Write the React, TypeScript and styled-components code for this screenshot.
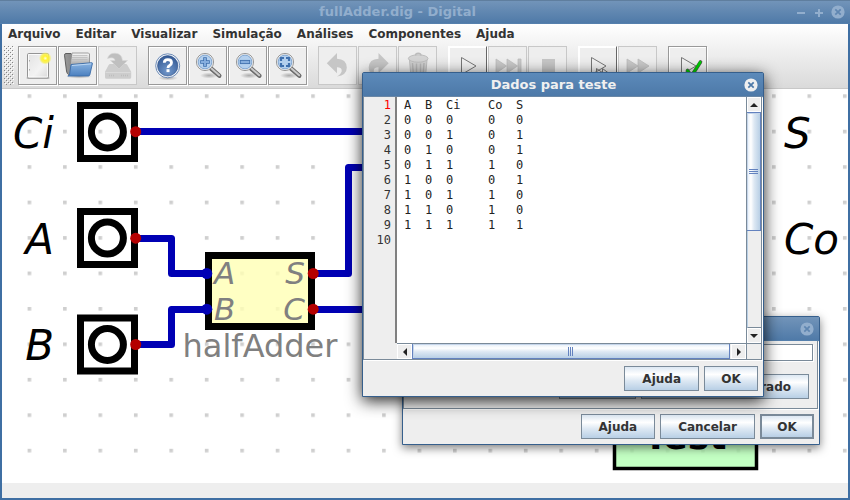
import React from "react";
import styled, { createGlobalStyle, css } from "styled-components";

const steel = "#7a8a99";
const face = "#eeeeee";
const metal = "linear-gradient(#dde8f3 0%, #ffffff 32%, #dde8f3 60%, #b8cfe5 100%)";

const GlobalStyle = createGlobalStyle`
  * { box-sizing: border-box; }
  body { margin: 0; }
  body, button, input {
    font-family: "DejaVu Sans", Verdana, sans-serif;
    font-size: 12px;
    color: #333;
  }
`;

const Desktop = styled.div`
  position: relative;
  min-height: 100vh;
  overflow: hidden;
  display: flex;
  flex-direction: column;
`;

const MainWindow = styled.main`
  flex: 1;
  display: flex;
  flex-direction: column;
  border: solid #3f6fa3;
  border-width: 0 2px 2px;
`;

const TitleBar = styled.header<{ $active?: boolean }>`
  height: 24px;
  display: flex;
  align-items: center;
  justify-content: flex-end;
  border-top: 1px solid ${(p) => (p.$active ? "#3a6798" : "#5f7e9e")};
  border-bottom: 1px solid ${(p) => (p.$active ? "#6a87a6" : "#5580ad")};
  background: ${(p) =>
    p.$active
      ? "linear-gradient(#5c8aba, #4d79a8)"
      : "linear-gradient(#7294b9, #4f7aa8)"};
  color: ${(p) => (p.$active ? "#f0f0f0" : "#92aecd")};
`;

const MainTitle = styled(TitleBar)`
  margin: 0 -2px;
`;

const Title = styled.h1`
  flex: 1;
  margin: 0;
  font-size: 13px;
  line-height: 16px;
  font-weight: bold;
  text-align: center;
  white-space: nowrap;
`;

const WindowButtons = styled.div`
  display: flex;
  gap: 4px;
  padding-right: 5px;
`;

const WindowButton = styled.button`
  width: 14px;
  height: 14px;
  padding: 0;
  border: 0;
  background: none;
  color: inherit;
  svg { display: block; }
`;

const TopBars = styled.div`
  background: linear-gradient(#ffffff, #dadada);
  border-bottom: 1px solid #c8c8c8;
`;

const MenuBar = styled.nav`
  display: flex;
  gap: 15px;
  height: 20px;
  padding: 0 6px;
`;

const MenuItem = styled.button`
  padding: 0;
  border: 0;
  background: none;
  font-weight: bold;
  line-height: 18px;
  white-space: nowrap;
`;

const Toolbar = styled.div`
  display: flex;
  gap: 11px;
  padding: 2px 2px 3px;
`;

const Grip = styled.svg`
  width: 10px;
  height: 39px;
  margin-right: -7px;
`;

const ToolGroup = styled.div`
  display: flex;
  gap: 1px;
`;

const ToolButton = styled.button<{ $raised?: boolean }>`
  width: 39px;
  height: 39px;
  padding: 0;
  background: ${face};
  border: 1px solid #999;
  box-shadow: inset 1px 1px #fff, 1px 1px #fff;
  svg { display: block; }
  &:disabled {
    border-color: #c8c8c8;
    box-shadow: none;
  }
  ${(p) =>
    p.$raised &&
    css`
      border-color: #fff #666 #999 #fff;
    `}
`;

const Canvas = styled.section`
  flex: 1;
  display: flex;
  background: #fff;
`;

const Circuit = styled.svg`
  flex: 1;
  min-width: 0;
  height: 394px;
  min-height: 100%;
  font-family: "DejaVu Sans", Verdana, sans-serif;
`;

const StatusBar = styled.footer`
  height: 15px;
  background: ${face};
`;

const Dialog = styled.section<{ $x: number; $y: number; $w: number; $active?: boolean }>`
  position: absolute;
  left: ${(p) => p.$x}px;
  top: ${(p) => p.$y}px;
  width: ${(p) => p.$w}px;
  background: ${face};
  border: 1px solid #365f8c;
  border-radius: 2px 2px 0 0;
  box-shadow: ${(p) =>
    p.$active ? "0 4px 16px rgba(0,0,0,.85)" : "0 3px 10px rgba(0,0,0,.5)"};
`;

const DialogTitle = styled(TitleBar)`
  border-top: 0;
`;

const DialogFooter = styled.div`
  display: flex;
  justify-content: flex-end;
  gap: 5px;
  padding: 5px;
`;

const Button = styled.button<{ $default?: boolean }>`
  height: 25px;
  border: ${(p) => (p.$default ? 2 : 1)}px solid ${steel};
  padding: 0 ${(p) => (p.$default ? 15 : 16)}px;
  background: ${metal};
  font-weight: bold;
  line-height: 20px;
  white-space: nowrap;
  min-width: 54px;
`;

const WideButton = styled(Button)`
  padding: 0 17px;
`;

const ScrollPane = styled.div`
  display: grid;
  grid-template-columns: 33px 1fr 15px;
  grid-template-rows: 246px 16px;
  border: solid ${steel};
  border-width: 0 1px 1px;
  margin: 0 1px 1px 0;
  box-shadow: 1px 1px #fff;
`;

const Gutter = styled.ol`
  margin: 0;
  padding: 1px 4px 0 0;
  list-style: none;
  text-align: right;
  border-right: 2px solid #808080;
  font: 12px/15px "DejaVu Sans Mono", monospace;
`;

const LineNumber = styled.li<{ $current: boolean }>`
  color: ${(p) => (p.$current ? "#f00" : "#333")};
`;

const Editor = styled.textarea`
  width: 100%;
  height: 100%;
  margin: 0;
  padding: 1px 7px 0;
  border: 0;
  outline: 0;
  resize: none;
  overflow: hidden;
  background: #fff;
  color: #222;
  font: 12px/15px "DejaVu Sans Mono", monospace;
  tab-size: 7px;
  white-space: pre;
`;

const ScrollBar = styled.div<{ $horizontal?: boolean }>`
  display: flex;
  flex-direction: ${(p) => (p.$horizontal ? "row" : "column")};
  border: solid ${steel};
  border-width: ${(p) => (p.$horizontal ? "1px 0 0" : "0 0 0 1px")};
  ${(p) => p.$horizontal && "grid-column: 2;"}
`;

const Arrow = styled.button`
  flex: 0 0 15px;
  display: grid;
  place-items: center;
  min-width: 0;
  padding: 0;
  border: 1px solid #fff;
  background: ${face};
  color: #222;
`;

const Thumb = styled.div<{ $horizontal?: boolean }>`
  display: grid;
  place-items: center;
  border: 1px solid #6382bf;
  box-shadow: inset 1px 1px #c5d5ea;
  ${(p) =>
    p.$horizontal
      ? css`
          flex: 1;
          border-top: 0;
          margin-right: 1px;
          background: linear-gradient(#e3edf7, #fff 30%, #dde8f3 55%, #b8cfe5);
        `
      : css`
          flex: 0 0 119px;
          border-left: 0;
          background: linear-gradient(90deg, #e3edf7, #fff 30%, #dde8f3 55%, #b8cfe5);
        `}
`;

const Track = styled.div`
  flex: 1;
  border-bottom: 1px solid ${steel};
  border-left: 1px solid #b8cfe5;
`;

const Corner = styled.div`
  border: solid ${steel};
  border-width: 1px 0 0 1px;
`;

const Form = styled.div`
  display: flex;
  flex-direction: column;
  gap: 13px;
  margin: 0 1px 0 0;
  padding: 3px 4px 9px;
  border: 1px solid ${steel};
  border-top: 0;
  box-shadow: 1px 1px #fff;
`;

const TextBox = styled.input`
  align-self: flex-end;
  width: 60%;
  height: 17px;
  border: 1px solid ${steel};
  box-shadow: 1px 1px #fff;
  background: #fff;
`;

const FormButtons = styled.div`
  display: flex;
  justify-content: flex-end;
  gap: 5px;
  padding-right: 4px;
`;

/* ---------- icons ---------- */

const CloseIcon = ({ cross }: { cross: string }) => (
  <svg width="14" height="14" viewBox="0 0 14 14">
    <circle cx="7" cy="7" r="6.6" fill="currentColor" />
    <path d="M4.3 4.3l5.4 5.4M9.7 4.3L4.3 9.7" stroke={cross} strokeWidth="1.7" />
  </svg>
);

const Icon = ({ children }: { children: React.ReactNode }) => (
  <svg width="37" height="37" viewBox="0 0 37 37">{children}</svg>
);

const HiddenDefs = styled.svg`
  position: absolute;
`;

const Defs = () => (
  <HiddenDefs width="0" height="0" aria-hidden="true">
    <defs>
      <pattern id="grip" width="4" height="4" patternUnits="userSpaceOnUse">
        <path d="M0 0h1v1H0zM2 2h1v1H2z" fill="#858585" />
        <path d="M1 1h1v1H1zM3 3h1v1H3z" fill="#fff" />
      </pattern>
      <linearGradient id="paper" x1="0" y1="0" x2="1" y2="1">
        <stop offset="0" stopColor="#e2e2e2" /><stop offset=".6" stopColor="#f3f3f3" /><stop offset="1" stopColor="#d8d8d8" />
      </linearGradient>
      <radialGradient id="glow">
        <stop offset="0" stopColor="#fffde0" /><stop offset=".35" stopColor="#fff230" />
        <stop offset=".7" stopColor="#f8f050" stopOpacity=".85" /><stop offset="1" stopColor="#f5f080" stopOpacity="0" />
      </radialGradient>
      <linearGradient id="folder" x1="0" y1="0" x2="0" y2="1">
        <stop offset="0" stopColor="#8ab4e2" /><stop offset="1" stopColor="#4b80bf" />
      </linearGradient>
      <linearGradient id="folderBack" x1="0" y1="0" x2="1" y2="0">
        <stop offset="0" stopColor="#9a9a9a" /><stop offset="1" stopColor="#686868" />
      </linearGradient>
      <linearGradient id="sheet" x1="0" y1="0" x2="0" y2="1">
        <stop offset="0" stopColor="#fafafa" /><stop offset="1" stopColor="#a0a0a0" />
      </linearGradient>
      <radialGradient id="helpBlue" cx=".5" cy=".75" r=".8">
        <stop offset="0" stopColor="#7399cc" /><stop offset="1" stopColor="#2f5590" />
      </radialGradient>
      <radialGradient id="shade">
        <stop offset="0" stopColor="#000" stopOpacity=".28" /><stop offset="1" stopColor="#000" stopOpacity="0" />
      </radialGradient>
    </defs>
  </HiddenDefs>
);

const NewIcon = () => (
  <Icon>
    <rect x="7.5" y="30" width="23" height="2" rx="1" fill="#bbb" />
    <rect x="8.5" y="6.5" width="21" height="24.5" rx="1.2" fill="url(#paper)" stroke="#949494" />
    <path d="M9.5 7.5h19v22.5h-19z" fill="none" stroke="#fff" strokeOpacity=".8" />
    <path d="M10.5 13v1.5M10.5 22v1.5" stroke="#aaa" />
    <circle cx="26.3" cy="11.3" r="6.4" fill="url(#glow)" />
  </Icon>
);

const OpenIcon = () => (
  <Icon>
    <ellipse cx="20" cy="29.5" rx="13" ry="2.2" fill="url(#shade)" />
    <path d="M5.5 8.2q0-1.7 1.5-1.7h5l1.2 2h14.3v19H9.5Q8 27 7.5 24z" fill="url(#folderBack)" stroke="#5e5e5e" />
    <path d="M13 6h16.5l1 1v12H11z" fill="url(#sheet)" stroke="#888" strokeWidth=".8" />
    <path d="M13.5 8.5h15M13 10.5h15.5M13 12.5h15.5" stroke="#bbb" strokeWidth=".8" />
    <path d="M12 17.5l20.8-1.8q.8 0 .6 1l-2.6 11.2q-.3 1-1.3 1.1H8.8q1.5-.3 1.8-1.7z" fill="url(#folder)" stroke="#3b6ca8" strokeWidth=".9" />
    <path d="M13 18.5l19-1.6" stroke="#bcd7f3" />
  </Icon>
);

const SaveIcon = () => (
  <Icon>
    <path d="M11.5 17h15q1.5 0 2 1.3l3.7 6.4v5.600q0 1.500-1.500 1.500H7.500Q6 31.800 6 30.300v-5.600l3.500-6.400q.5-1.300 2-1.300z" fill="#cdcdcd" />
    <path d="M6.500 25.500h25" stroke="#dadada" />
    <path d="M22 28.500h7M10 28.500h6" stroke="#bdbdbd" strokeWidth="1.5" strokeDasharray="1 1" />
    <path d="M8.500 11.500Q10 6 16 6.200q7 .3 7.500 7.300h5L20 22l-8.500-8.500h4.500q-.5-4-7.500-2z" fill="#bfbfbf" stroke="#d6d6d6" strokeWidth=".6" />
  </Icon>
);

const HelpIcon = () => (
  <Icon>
    <ellipse cx="19" cy="31" rx="10" ry="2.5" fill="url(#shade)" />
    <circle cx="18.7" cy="18.8" r="12" fill="#f4f7fb" stroke="#5f80b0" strokeWidth=".9" />
    <circle cx="18.7" cy="18.8" r="10.2" fill="url(#helpBlue)" stroke="#2c4f86" strokeWidth=".6" />
    <path d="M15.300 15.800q0-3.100 3.500-3.100 3.700 0 3.700 3 0 1.700-1.900 2.700-1.600.8-1.600 2.600" fill="none" stroke="#fff" strokeWidth="2.8" />
    <rect x="17.5" y="22.2" width="3" height="2.9" fill="#fff" />
  </Icon>
);

const ZoomIcon = ({ mark }: { mark: "in" | "out" | "fit" }) => (
  <Icon>
    <ellipse cx="20" cy="28.5" rx="9" ry="3" fill="url(#shade)" />
    <path d="M22 21.5l8.3 7.2" stroke="#6a6a6a" strokeWidth="4.4" strokeLinecap="round" />
    <path d="M22.5 21.5l7.7 6.8" stroke="#c9c9c9" strokeWidth="2" strokeLinecap="round" />
    <circle cx="16" cy="15" r="8.6" fill="#f2f2f2" stroke="#8e8e8e" strokeWidth=".9" />
    <circle cx="16" cy="15" r="6.9" fill="#b4d0ee" stroke="#7ea4d0" />
    {mark === "in" && <path d="M16 10.2v9.6M11.2 15h9.6" stroke="#3f70ae" strokeWidth="3.6" />}
    {mark === "in" && <path d="M16 11v8M12 15h8" stroke="#86aede" strokeWidth="1.9" />}
    {mark === "out" && <rect x="11.3" y="13.4" width="9.4" height="3.2" fill="#86aede" stroke="#3f70ae" strokeWidth=".9" />}
    {mark === "fit" && (
      <path d="M12 14v-3h3M17 11h3v3M20 16v3h-3M15 19h-3v-3" fill="none" stroke="#3f70ae" strokeWidth="2.2" />
    )}
  </Icon>
);

const arrowPath = "M7.8 16.2L18 6v5.7q9.500.3 9.800 8.800.1 7.500-9.800 9 5.200-3 4.700-6.400-.5-2.900-4.700-2.800v5.900z";
const UndoIcon = () => <Icon><path d={arrowPath} fill="#c6c6c6" /></Icon>;
const RedoIcon = () => (
  <Icon><g transform="translate(37.5 0) scale(-1 1)"><path d={arrowPath} fill="#c6c6c6" /></g></Icon>
);

const TrashIcon = () => (
  <Icon>
    <path d="M10.5 13h17.5l-1.5 17q-7 3-14.5 0z" fill="#cfcfcf" stroke="#bdbdbd" />
    <path d="M13.5 16l1 13M17.5 16.5v13M21.5 16.5v13M25 16l-1 13" stroke="#b5b5b5" strokeWidth="1.4" />
    <ellipse cx="19.2" cy="11.5" rx="9.8" ry="3.7" fill="#d4d4d4" stroke="#bdbdbd" />
    <path d="M16.5 8.5q0-2.2 2.7-2.2t2.7 2.2" fill="none" stroke="#bbb" strokeWidth="1.5" />
  </Icon>
);

const PlayIcon = ({ mark }: { mark?: "break" | "check" }) => (
  <Icon>
    <path d="M12.5 10.5v17L27 19z" fill="#f2f2f2" stroke="#777" />
    {mark === "break" && <path d="M17.5 21.5v9l6.5-4.5zM23.5 21.5v9l6-4.5z" fill="none" stroke="#777" />}
    {mark === "check" && (
      <g fill="none" strokeLinecap="round" strokeLinejoin="round">
        <path d="M18.5 23.5l4 5.5L31.5 15" stroke="#555" strokeWidth="3.6" />
        <path d="M18.5 23.5l4 5.5L31.2 15.2" stroke="#00cc00" strokeWidth="2.6" />
      </g>
    )}
  </Icon>
);

const ForwardIcon = ({ bar }: { bar?: boolean }) => (
  <Icon>
    <path
      d={bar ? "M7 12v14l10.500-7zM18 12v14l10.500-7zM29 12h3v14h-3z" : "M8 12v14l11-7zM19 12v14l11-7z"}
      fill="#c9c9c9" stroke="#bdbdbd" strokeWidth=".8"
    />
  </Icon>
);

const StopIcon = () => <Icon><rect x="13" y="12" width="13" height="13" fill="#c6c6c6" /></Icon>;

interface Tool { label: string; icon: React.ReactNode; disabled?: boolean; raised?: boolean }

const toolGroups: Tool[][] = [
  [
    { label: "Novo", icon: <NewIcon /> },
    { label: "Abrir", icon: <OpenIcon /> },
    { label: "Salvar", icon: <SaveIcon />, disabled: true },
  ],
  [
    { label: "Ajuda", icon: <HelpIcon /> },
    { label: "Ampliar", icon: <ZoomIcon mark="in" /> },
    { label: "Reduzir", icon: <ZoomIcon mark="out" /> },
    { label: "Ajustar à janela", icon: <ZoomIcon mark="fit" /> },
  ],
  [
    { label: "Desfazer", icon: <UndoIcon />, disabled: true },
    { label: "Refazer", icon: <RedoIcon />, disabled: true },
    { label: "Remover", icon: <TrashIcon />, disabled: true },
  ],
  [
    { label: "Iniciar", icon: <PlayIcon />, raised: true },
    { label: "Passo", icon: <ForwardIcon bar />, disabled: true },
    { label: "Parar", icon: <StopIcon />, disabled: true },
  ],
  [
    { label: "Executar até parada", icon: <PlayIcon mark="break" />, raised: true },
    { label: "Avançar", icon: <ForwardIcon />, disabled: true },
  ],
  [{ label: "Executar testes", icon: <PlayIcon mark="check" /> }],
];

const menus = ["Arquivo", "Editar", "Visualizar", "Simulação", "Análises", "Componentes", "Ajuda"];

/* ---------- circuit ---------- */

const InputPin = ({ y }: { y: number }) => (
  <g>
    <rect x="80.5" y={y - 26.5} width="54" height="53" fill="none" stroke="#000" strokeWidth="7" />
    <circle cx="107.4" cy={y} r="16" fill="none" stroke="#000" strokeWidth="7" />
  </g>
);

const Dot = ({ x, y, color = "#b40000" }: { x: number; y: number; color?: string }) => (
  <circle cx={x} cy={y} r="5.5" fill={color} />
);

const CircuitDrawing = () => (
  <Circuit role="img" aria-label="fullAdder">
    <defs>
      <pattern id="grid" x="25.6" y="5.3" width="35.45" height="35.45" patternUnits="userSpaceOnUse">
        <rect width="3.6" height="3.6" fill="#cfcfcf" />
      </pattern>
    </defs>
    <rect width="100%" height="100%" fill="url(#grid)" />
    <g transform="translate(-2 -89)">
      <InputPin y={132} />
      <InputPin y={238} />
      <InputPin y={344.5} />
      <rect x="208.5" y="255.5" width="103" height="71" fill="#ffffb4" fillOpacity=".8" stroke="#000" strokeWidth="7" />
      <g fill="none" stroke="#0000b4" strokeWidth="7" strokeLinejoin="round">
        <path d="M136 131.500H380" />
        <path d="M136 238.500h35.500v35H207" />
        <path d="M136 344.500h35.500v-35H207" />
        <path d="M313 273.500h35.500v-106H380" />
        <path d="M313 309.500H380" />
      </g>
      <Dot x={135.7} y={131.7} />
      <Dot x={135.7} y={238.2} />
      <Dot x={135.7} y={344.5} />
      <Dot x={206.8} y={273.5} color="#0000b4" />
      <Dot x={206.8} y={309.2} color="#0000b4" />
      <Dot x={313.2} y={273.5} />
      <Dot x={313.2} y={309.2} />
      <g fontSize="42" fontStyle="italic" fill="#000">
        <text x="54" y="148" textAnchor="end">Ci</text>
        <text x="54" y="254" textAnchor="end">A</text>
        <text x="54" y="360" textAnchor="end">B</text>
        <text x="784" y="148">S</text>
        <text x="784" y="254">Co</text>
      </g>
      <g fontSize="31" fontStyle="italic" fill="#808080">
        <text x="214" y="284">A</text>
        <text x="214" y="320">B</text>
        <text x="305" y="284" textAnchor="end">S</text>
        <text x="305" y="320" textAnchor="end">C</text>
      </g>
      <text x="260" y="357" fontSize="32" fill="#808080" textAnchor="middle">halfAdder</text>
      <rect x="614.5" y="412" width="142" height="56.5" fill="#b4ffb4" fillOpacity=".8" stroke="#000" strokeWidth="3.5" />
      <text x="685" y="449" fontSize="36" fontWeight="bold" textAnchor="middle">Test</text>
    </g>
  </Circuit>
);

const testData = [
  "A\t\tB\t\tCi\t\t\t\tCo\t\tS",
  ...["00000", "00101", "01001", "01110", "10001", "10110", "11010", "11111"].map(
    ([a, b, ci, co, s]) => `${a}\t\t${b}\t\t${ci}\t\t\t\t\t${co}\t\t\t${s}`
  ),
  "",
];

export default function App() {
  return (
    <Desktop>
      <GlobalStyle />
      <Defs />
      <MainWindow>
        <MainTitle>
          <Title>fullAdder.dig - Digital</Title>
          <WindowButtons>
            <WindowButton aria-label="Minimizar">
              <svg width="14" height="14"><path d="M2 8h8" stroke="currentColor" strokeWidth="2" /></svg>
            </WindowButton>
            <WindowButton aria-label="Maximizar">
              <svg width="14" height="14"><path d="M2 8h8M6 4v8" stroke="currentColor" strokeWidth="2" /></svg>
            </WindowButton>
            <WindowButton aria-label="Fechar"><CloseIcon cross="#5f86b1" /></WindowButton>
          </WindowButtons>
        </MainTitle>
        <TopBars>
          <MenuBar>
            {menus.map((m) => <MenuItem key={m}>{m}</MenuItem>)}
          </MenuBar>
          <Toolbar>
            <Grip aria-hidden="true"><rect width="10" height="39" fill="url(#grip)" /></Grip>
            {toolGroups.map((group, i) => (
              <ToolGroup key={i}>
                {group.map((t) => (
                  <ToolButton key={t.label} aria-label={t.label} disabled={t.disabled} $raised={t.raised}>
                    {t.icon}
                  </ToolButton>
                ))}
              </ToolGroup>
            ))}
          </Toolbar>
        </TopBars>
        <Canvas><CircuitDrawing /></Canvas>
        <StatusBar />
      </MainWindow>

      <Dialog $x={402} $y={316} $w={418}>
        <DialogTitle>
          <WindowButtons>
            <WindowButton aria-label="Fechar"><CloseIcon cross="#5f86b1" /></WindowButton>
          </WindowButtons>
        </DialogTitle>
        <Form>
          <TextBox aria-label="Rótulo" />
          <FormButtons>
            <WideButton>Editar</WideButton>
            <WideButton>Editar em separado</WideButton>
          </FormButtons>
        </Form>
        <DialogFooter>
          <WideButton>Ajuda</WideButton>
          <WideButton>Cancelar</WideButton>
          <Button $default>OK</Button>
        </DialogFooter>
      </Dialog>

      <Dialog $x={362} $y={72} $w={402} $active>
        <DialogTitle $active>
          <Title>Dados para teste</Title>
          <WindowButtons>
            <WindowButton aria-label="Fechar"><CloseIcon cross="#4d79a8" /></WindowButton>
          </WindowButtons>
        </DialogTitle>
        <ScrollPane>
          <Gutter>
            {testData.map((_, i) => <LineNumber key={i} $current={i === 0}>{i + 1}</LineNumber>)}
          </Gutter>
          <Editor aria-label="Dados para teste" spellCheck={false} defaultValue={testData.join("\n")} />
          <ScrollBar>
            <Arrow aria-label="Para cima"><svg width="8" height="4"><path d="M0 4L4 0l4 4z" fill="currentColor" /></svg></Arrow>
            <Thumb>
              <svg width="9" height="6"><path d="M0 .5h9M0 2.500h9M0 4.500h9" stroke="#6382bf" /></svg>
            </Thumb>
            <Track />
            <Arrow aria-label="Para baixo"><svg width="8" height="4"><path d="M0 0l4 4 4-4z" fill="currentColor" /></svg></Arrow>
          </ScrollBar>
          <ScrollBar $horizontal>
            <Arrow aria-label="Para a esquerda"><svg width="4" height="8"><path d="M4 0L0 4l4 4z" fill="currentColor" /></svg></Arrow>
            <Thumb $horizontal>
              <svg width="6" height="9"><path d="M.5 0v9M2.500 0v9M4.500 0v9" stroke="#6382bf" /></svg>
            </Thumb>
            <Arrow aria-label="Para a direita"><svg width="4" height="8"><path d="M0 0l4 4-4 4z" fill="currentColor" /></svg></Arrow>
          </ScrollBar>
          <Corner />
        </ScrollPane>
        <DialogFooter>
          <WideButton>Ajuda</WideButton>
          <Button>OK</Button>
        </DialogFooter>
      </Dialog>
    </Desktop>
  );
}
